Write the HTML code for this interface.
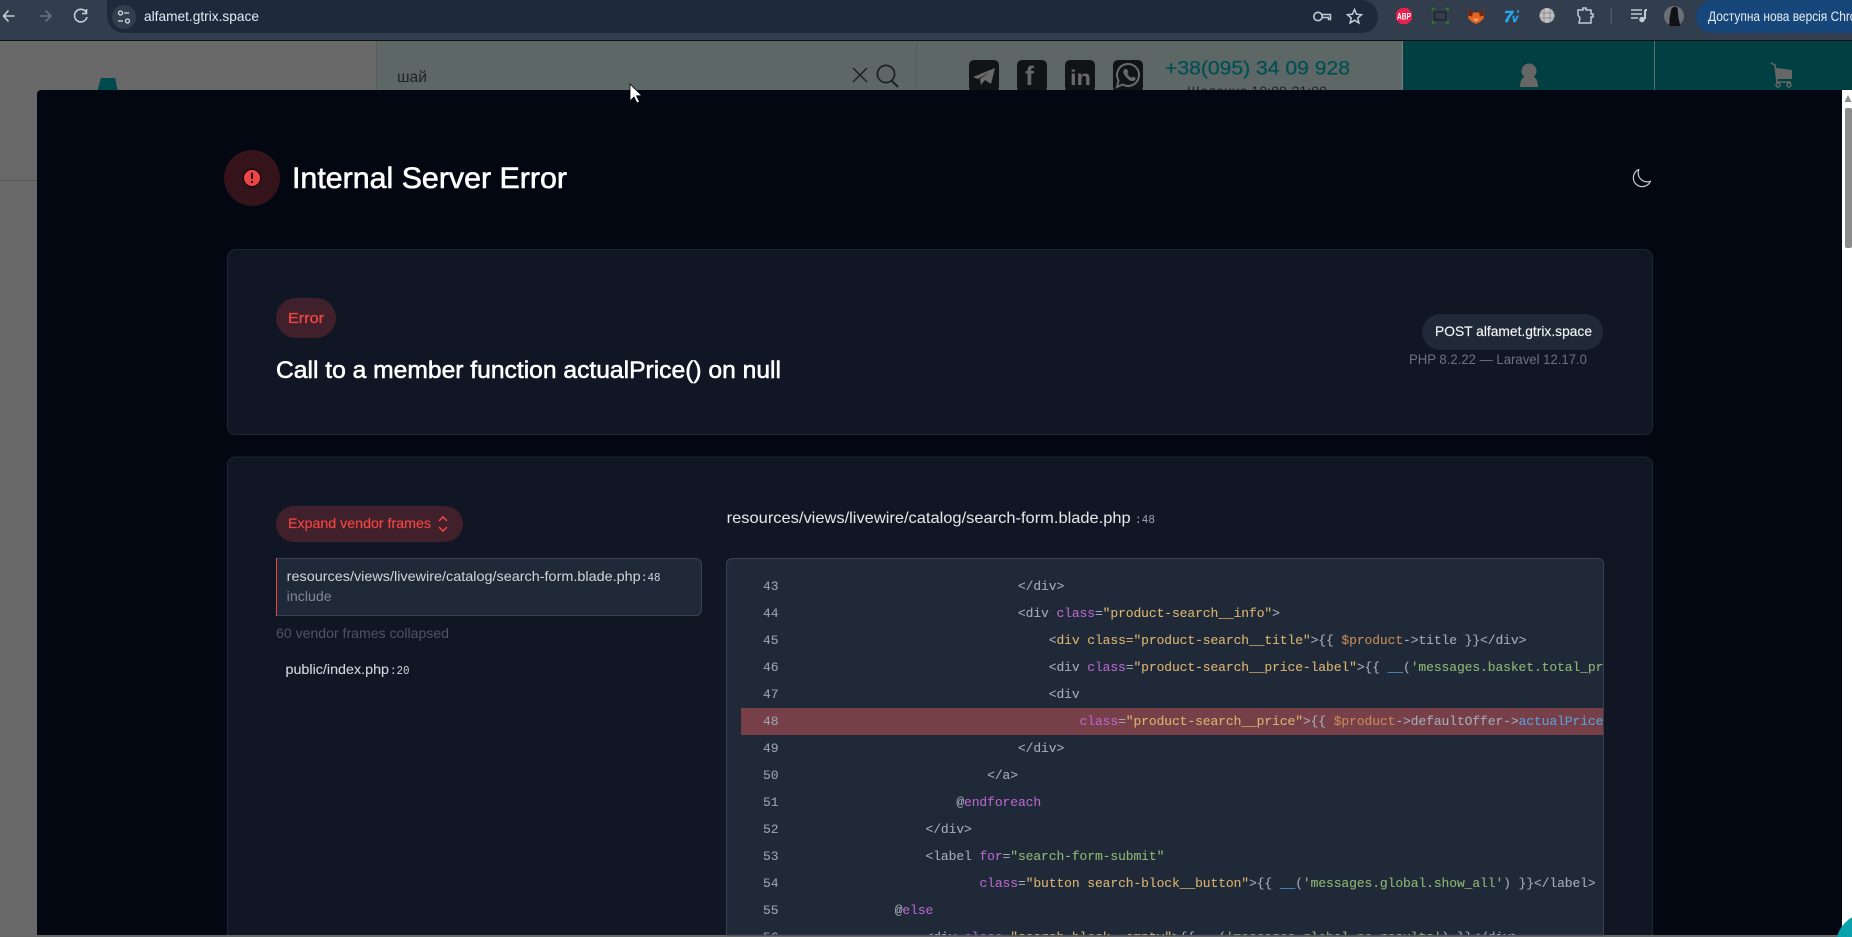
<!DOCTYPE html>
<html lang="uk"><head><meta charset="utf-8"><title>alfamet.gtrix.space</title>
<style>
html,body{margin:0;padding:0;width:1852px;height:937px;overflow:hidden;background:#696969}
svg{position:absolute;left:0;top:0;display:block}
svg text{font-family:"Liberation Sans",Arial,sans-serif;white-space:pre}
svg text.m{font-family:"Liberation Mono",monospace}
#code{position:absolute;left:741px;top:573px;width:862px;height:362px;overflow:hidden;font:13px/27px "Liberation Mono",monospace;letter-spacing:-.1px;color:#a3abb7;-webkit-text-stroke:.1px}
#code div{height:27px;white-space:pre;position:relative;padding-left:61.3px}
#code i{font-style:normal;position:absolute;left:22px;top:0;color:#9aa2ae}
.p{color:#b766cc}.y{color:#d9b26f}.g{color:#8fb573}.o{color:#c48a5b}.b{color:#5a9fdb}
</style></head><body>
<svg width="1852" height="937" viewBox="0 0 1852 937">
<!-- website behind -->
<rect x="0" y="41" width="1852" height="896" fill="#696969"/>
<rect x="376" y="41" width="1026" height="60" fill="#5c6766"/>
<rect x="376" y="41" width="1" height="60" fill="#545d5c"/>
<rect x="916" y="41" width="1" height="60" fill="#525c5b"/>
<rect x="1402" y="41" width="450" height="60" fill="#004043"/>
<rect x="1402" y="41" width="1" height="60" fill="#7b7b7b"/>
<rect x="1654" y="41" width="1" height="60" fill="#5d6e6e"/>
<rect x="0" y="180" width="37" height="1" fill="#565656"/>
<polygon points="101,78 115,78 118,92 97,92" fill="#00494d"/>
<text x="397" y="82" font-size="16" fill="#1e2423" textLength="30" lengthAdjust="spacingAndGlyphs">шай</text>
<path d="M853 68l14 14M867 68l-14 14" stroke="#1b2120" stroke-width="1.4" fill="none"/>
<circle cx="886" cy="74" r="8.6" stroke="#1b2120" stroke-width="1.7" fill="none"/>
<path d="M892 81l6 6" stroke="#1b2120" stroke-width="2" fill="none"/>
<rect x="969" y="60" width="30" height="32" rx="5" fill="#101414"/>
<path d="M973 77L995 68L991 84L985 80L981 85L980 79L990 72L978 79Z" fill="#6a6a6a"/>
<rect x="1017" y="60" width="30" height="32" rx="5" fill="#101414"/>
<text x="1025" y="85" font-size="27" font-weight="700" fill="#666">f</text>
<rect x="1065" y="60" width="30" height="32" rx="5" fill="#101414"/>
<text x="1070" y="85" font-size="21" font-weight="700" fill="#6a6a6a" textLength="21" lengthAdjust="spacingAndGlyphs">in</text>
<rect x="1113" y="60" width="30" height="32" rx="5" fill="#101414"/>
<path d="M1117 87l1.500-6.500a11 11 0 1 1 4 4z" fill="none" stroke="#6a6a6a" stroke-width="2"/>
<path d="M1124 70c2-2 3-1 4 1s-1 2-.5 3 2 3 3.500 3.500 1-1.500 3-.5 2 2 1 3-4 2-7-1-6-6-4-9z" fill="#6a6a6a"/>
<text x="1165" y="74.500" font-size="19" fill="#044f54" stroke="#044f54" stroke-width=".3" textLength="185" lengthAdjust="spacingAndGlyphs">+38(095) 34 09 928</text>
<text x="1187" y="96" font-size="14" fill="#222" textLength="140" lengthAdjust="spacingAndGlyphs">Щоденно 10:00-21:00</text>
<circle cx="1529" cy="71" r="7.500" fill="#666"/>
<path d="M1520 87c0-9 4-11 9-11s9 2 9 11z" fill="#666"/>
<path d="M1771 63l4 2 2 17h14" fill="none" stroke="#666" stroke-width="1.600"/>
<path d="M1776 68l16 2v9h-15z" fill="#666"/>
<circle cx="1778" cy="85" r="2" fill="none" stroke="#666" stroke-width="1.500"/><circle cx="1789" cy="85" r="2" fill="none" stroke="#666" stroke-width="1.500"/>

<!-- browser toolbar -->
<rect x="0" y="0" width="1852" height="40" fill="#323d4e"/>
<rect x="0" y="40" width="1852" height="1" fill="#0c0f14"/>
<path d="M124 0H1361a17 17 0 0 1 17 17 16 16 0 0 1-16 16H124a17 17 0 0 1-17-17V0z" fill="#1e2a3b"/>
<path d="M3.500 16h11M8.500 10.500L3.500 16l5 5.500" fill="none" stroke="#c9ced6" stroke-width="1.600"/>
<path d="M51 16H40M45.500 10.500L51 16l-5.500 5.500" fill="none" stroke="#69727f" stroke-width="1.600"/>
<path d="M86 12a6.300 6.300 0 1 0 1 5M86.500 9v4.500H82" fill="none" stroke="#c9ced6" stroke-width="1.600"/>
<circle cx="124" cy="17" r="12" fill="#323d4e"/>
<circle cx="120.500" cy="13" r="2" fill="none" stroke="#d6dae0" stroke-width="1.300"/><path d="M124 13h5M118 21h5" stroke="#d6dae0" stroke-width="1.300"/><circle cx="127.500" cy="21" r="2" fill="none" stroke="#d6dae0" stroke-width="1.300"/>
<text x="144" y="21" font-size="14" fill="#e6ebf2" textLength="115" lengthAdjust="spacingAndGlyphs">alfamet.gtrix.space</text>
<circle cx="1318" cy="16.500" r="4.200" fill="none" stroke="#c6cbd3" stroke-width="1.600"/><path d="M1322 14.500h8.500v5h-2v-2h-6.500" fill="none" stroke="#c6cbd3" stroke-width="1.500"/>
<path d="M1354.500 9.500l2 4.700 5 .5-3.800 3.300 1.200 4.900-4.400-2.600-4.400 2.600 1.200-4.900-3.800-3.300 5-.5z" fill="none" stroke="#c6cbd3" stroke-width="1.500"/>
<polygon points="1400.500,8 1407.500,8 1412,12.500 1412,19.500 1407.500,24 1400.500,24 1396,19.500 1396,12.500" fill="#e8204f"/>
<text x="1397" y="19.500" font-size="9" font-weight="700" fill="#fff" textLength="14" lengthAdjust="spacingAndGlyphs">ABP</text>
<rect x="1434.500" y="12" width="11.500" height="8" fill="none" stroke="#1e2630" stroke-width="1.500"/>
<path d="M1432.500 11.500V8.500h3M1445 8.500h3V11.500M1432.500 20v3h3M1445 23h3V20" fill="none" stroke="#2f7a28" stroke-width="1.500"/>
<path d="M1468 9l5 3.500h6L1484 9l-.5 6 .5 3-4 4-4 2-4-2-4-4 .5-3z" fill="#e2651e"/>
<path d="M1468 9l5 3.500-1 4-3.500-1zM1484 9l-5 3.500 1 4 3.500-1z" fill="#6e2610"/>
<path d="M1473 18l3 1 3-1-1.500 3h-3z" fill="#f4a27a"/>
<text x="1504" y="22" font-size="16" font-weight="700" font-style="italic" fill="#25a8f0" stroke="#25a8f0" stroke-width=".6">7</text>
<text x="1512" y="22" font-size="11" font-weight="700" font-style="italic" fill="#25a8f0" stroke="#25a8f0" stroke-width=".4">v</text>
<circle cx="1518" cy="11.500" r="1.200" fill="#25a8f0"/>
<circle cx="1547" cy="15.500" r="7.500" fill="#c2c2c2"/><path d="M1540 13h14M1540 18h14M1544 8.500v14M1550 8.500v14" stroke="#8e8e8e" stroke-width="1"/>
<path d="M1578 10h5v-2h3v2h5v4h2v3h-2v6h-12l1-5-2-3z" fill="none" stroke="#c2c9d4" stroke-width="1.500"/>
<rect x="1610.500" y="8" width="1.500" height="16" fill="#4c5767"/>
<path d="M1631 10h11M1631 14h11M1631 18h7" stroke="#c2c9d4" stroke-width="1.500"/><path d="M1645 10v9" stroke="#c2c9d4" stroke-width="2"/><path d="M1645 10h2" stroke="#c2c9d4" stroke-width="2"/><circle cx="1642" cy="19.500" r="2.800" fill="#c2c9d4"/>
<circle cx="1674" cy="16" r="10" fill="#6b7076"/><path d="M1669 26c1-5 0-7 1-10s0-8 4-9 4 3 4 7 2 8 2 12z" fill="#111116"/>
<path d="M1852 0H1713a17 17 0 0 0-17 17 16 16 0 0 0 16 16H1852z" fill="#16467a"/>
<text x="1708" y="21" font-size="13.500" fill="#e6edf5" textLength="165" lengthAdjust="spacingAndGlyphs">Доступна нова версія Chrome</text>

<!-- modal -->
<path d="M41 90H1842V935H37V94a4 4 0 0 1 4-4z" fill="#030712"/>
<rect x="1842" y="90" width="10" height="847" fill="#fff"/>
<polygon points="1848,95 1851.500,102 1844.500,102" fill="#8d8d8d"/>
<rect x="1845" y="108" width="7" height="140" rx="2" fill="#8d8d8d"/>
<rect x="0" y="935" width="1844" height="2" fill="#666"/>

<circle cx="252" cy="178" r="28" fill="#35131a"/>
<circle cx="252" cy="178" r="8.800" fill="#ef4444" stroke="#190a10" stroke-width="1.600"/>
<rect x="251" y="172.500" width="2" height="6.500" rx="1" fill="#190a10"/><circle cx="252" cy="182" r="1.200" fill="#190a10"/>
<text x="292" y="188" font-size="30" fill="#fff" stroke="#fff" stroke-width=".6" textLength="275" lengthAdjust="spacingAndGlyphs">Internal Server Error</text>
<path transform="translate(1630.600 167.400) scale(.917)" d="M21.752 15.002A9.72 9.72 0 0 1 18 15.750c-5.385 0-9.750-4.365-9.750-9.750 0-1.330.266-2.597.748-3.752A9.753 9.753 0 0 0 3 11.250C3 16.635 7.365 21 12.750 21a9.753 9.753 0 0 0 9.002-5.998Z" fill="none" stroke="#c5cad2" stroke-width="1.300" stroke-linejoin="round"/>

<!-- card 1 -->
<rect x="227.500" y="249.500" width="1425" height="185" rx="8" fill="#101623" stroke="#1e2735"/>
<rect x="276" y="298" width="60" height="40" rx="20" fill="#40202a"/>
<text x="288" y="323" font-size="15" fill="#ef4444" stroke="#ef4444" stroke-width=".35" textLength="36" lengthAdjust="spacingAndGlyphs">Error</text>
<text x="276" y="378" font-size="24" fill="#fff" stroke="#fff" stroke-width=".55" textLength="505" lengthAdjust="spacingAndGlyphs">Call to a member function actualPrice() on null</text>
<rect x="1422" y="314" width="181" height="36" rx="18" fill="#1f2937"/>
<text x="1435" y="336" font-size="14" fill="#f3f4f6" stroke="#f3f4f6" stroke-width=".15" textLength="157" lengthAdjust="spacingAndGlyphs">POST alfamet.gtrix.space</text>
<text x="1409" y="364" font-size="14" fill="#6b7280" textLength="178" lengthAdjust="spacingAndGlyphs">PHP 8.2.22 — Laravel 12.17.0</text>

<!-- card 2 -->
<path d="M227.500 940V465a8 8 0 0 1 8-8h1409a8 8 0 0 1 8 8v475" fill="#101623" stroke="#1e2735"/>
<rect x="0" y="935" width="1844" height="2" fill="#666"/>
<rect x="276" y="506" width="187" height="36" rx="18" fill="#40202a"/>
<text x="288" y="528" font-size="14" fill="#ef4444" stroke="#ef4444" stroke-width=".2" textLength="143" lengthAdjust="spacingAndGlyphs">Expand vendor frames</text>
<path transform="translate(430.500 511.500) scale(1.040)" d="M8.250 15 12 18.750 15.750 15m-7.500-6L12 5.250 15.750 9" fill="none" stroke="#ef4444" stroke-width="1.500"/>
<path d="M276.500 558.500H696a5.500 5.500 0 0 1 5.500 5.500v46a5.500 5.500 0 0 1-5.500 5.500H276.500z" fill="#1f2937" stroke="#374151"/>
<rect x="276" y="558" width="1" height="58" fill="#ef4444"/>
<text x="286.700" y="581" font-size="14" fill="#d1d5db" textLength="354" lengthAdjust="spacingAndGlyphs">resources/views/livewire/catalog/search-form.blade.php</text>
<text class="m" x="641" y="581" font-size="12" fill="#d1d5db" textLength="19.500" lengthAdjust="spacingAndGlyphs">:48</text>
<text x="286.700" y="601" font-size="14" fill="#7f8794" textLength="45" lengthAdjust="spacingAndGlyphs">include</text>
<text x="276" y="638" font-size="14" fill="#4b5563" textLength="173" lengthAdjust="spacingAndGlyphs">60 vendor frames collapsed</text>
<text x="285.500" y="674" font-size="14" fill="#d1d5db" stroke="#d1d5db" stroke-width=".1" textLength="103.500" lengthAdjust="spacingAndGlyphs">public/index.php</text>
<text class="m" x="390" y="674" font-size="12" fill="#d1d5db" textLength="19.500" lengthAdjust="spacingAndGlyphs">:20</text>
<text x="726.700" y="523" font-size="16" fill="#e5e7eb" textLength="404" lengthAdjust="spacingAndGlyphs">resources/views/livewire/catalog/search-form.blade.php</text>
<text class="m" x="1135" y="523" font-size="12" fill="#9ca3af" textLength="20" lengthAdjust="spacingAndGlyphs">:48</text>
<path d="M726.500 935V564a5.500 5.500 0 0 1 5.500-5.500h866a5.500 5.500 0 0 1 5.500 5.500v371z" fill="#1f2937" stroke="#374151"/>
<rect x="741" y="708" width="862" height="27" fill="#773f47"/>

<!-- floating widget -->
<circle cx="1868" cy="945" r="32" fill="#0aa3ad"/>
<!-- cursor -->
<path d="M630 84v17l4-4 3 6 2.500-1.200-3-6h5.500z" fill="#fff" stroke="#000" stroke-width=".8"/>
</svg>
<div id="code">
<div><i>43</i>                            &lt;/div&gt;</div>
<div><i>44</i>                            &lt;div <span class="p">class</span>=<span class="y">"product-search__info"</span>&gt;</div>
<div><i>45</i>                                &lt;<span class="y">div class="product-search__title"</span>&gt;{{ <span class="o">$product</span>-&gt;title }}&lt;/div&gt;</div>
<div><i>46</i>                                &lt;div <span class="p">class</span>=<span class="y">"product-search__price-label"</span>&gt;{{ <span class="b">__</span>(<span class="g">'messages.basket.total_price'</span>) }}&lt;/div&gt;</div>
<div><i>47</i>                                &lt;div</div>
<div><i>48</i>                                    <span class="p">class</span>=<span class="y">"product-search__price"</span>&gt;{{ <span class="o">$product</span>-&gt;defaultOffer-&gt;<span class="b">actualPrice</span>() }}&lt;/div&gt;</div>
<div><i>49</i>                            &lt;/div&gt;</div>
<div><i>50</i>                        &lt;/a&gt;</div>
<div><i>51</i>                    @<span class="p">endforeach</span></div>
<div><i>52</i>                &lt;/div&gt;</div>
<div><i>53</i>                &lt;label <span class="p">for</span>=<span class="g">"search-form-submit"</span></div>
<div><i>54</i>                       <span class="p">class</span>=<span class="y">"button search-block__button"</span>&gt;{{ <span class="b">__</span>(<span class="g">'messages.global.show_all'</span>) }}&lt;/label&gt;</div>
<div><i>55</i>            @<span class="p">else</span></div>
<div><i>56</i>                &lt;div <span class="p">class</span>=<span class="y">"search-block__empty"</span>&gt;{{ <span class="b">__</span>(<span class="g">'messages.global.no_results'</span>) }}&lt;/div&gt;</div>
</div>
</body></html>
